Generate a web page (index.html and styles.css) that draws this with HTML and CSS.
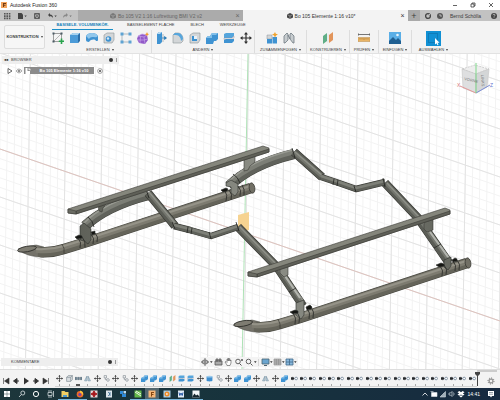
FILE: index.html
```html
<!DOCTYPE html>
<html lang="de">
<head>
<meta charset="utf-8">
<title>Autodesk Fusion 360</title>
<link rel="stylesheet" href="styles.css">
</head>
<body>
<svg class="defs" aria-hidden="true">
  <defs>
    <linearGradient id="steel" x1="0" y1="0" x2="1" y2="0"><stop offset="0" stop-color="#5f6159"/><stop offset=".5" stop-color="#8d8f87"/><stop offset="1" stop-color="#666860"/></linearGradient>
    <symbol id="move" viewBox="0 0 12 12"><path d="M6 1v10M1 6h10" stroke="#333" stroke-width="1.2"/><path d="M6 0l2 2.6H4zM6 12l2-2.6H4zM0 6l2.6-2v4zM12 6L9.400 4v4z" fill="#333"/></symbol>
    <symbol id="box" viewBox="0 0 12 12"><path d="M1 3l3-2h7v7l-2 3H1z" fill="#4c9bd8"/><path d="M1 3l3-2h7L9 3z" fill="#a8d2ef"/><path d="M9 3l2-2v8l-2 2z" fill="#2c6ea8"/></symbol>
    <symbol id="join" viewBox="0 0 12 12"><path d="M0 6l2-2h2l2-3h6v6l-2 2H8l-1 3H0z" fill="#3f93d2"/><path d="M0 6l2-2h2l2-3h6l-2 2H6v3z" fill="#82bfe9"/></symbol>
    <symbol id="split" viewBox="0 0 12 12"><path d="M1 2l2-1h8v3L9 6H1z" fill="#55a5dc"/><path d="M1 6h8l2-2v2L9 7.500H1z" fill="#e6e9ea" stroke="#889" stroke-width=".4"/><path d="M1 8l2-1h8v2l-2 2H1z" fill="#3f93d2"/></symbol>
    <symbol id="ghost" viewBox="0 0 12 12"><path d="M1 4l3-3h7v7l-3 3H1zM1 4h7v7M8 4l3-3" fill="#d9dde0" stroke="#77838b" stroke-width="1"/></symbol>
    <symbol id="group" viewBox="0 0 12 12"><path d="M0 4h3v4H0zM4.500 4h3v4h-3zM9 4h3v4H9z" fill="#6d8797" stroke="#455763" stroke-width=".7"/></symbol>
    <symbol id="mirror" viewBox="0 0 12 12"><path d="M5 2v8H1zM7 2l4 8H7z" fill="#cbdce6" stroke="#5b7b90" stroke-width=".9"/></symbol>
    <symbol id="joint" viewBox="0 0 12 12"><path d="M2 1h4v4H2zM4 5v3h3" fill="none" stroke="#77818a"/><circle cx="8.500" cy="8.500" r="2.300" fill="#eee" stroke="#77818a"/></symbol>
    <symbol id="dot" viewBox="0 0 12 12"><path d="M0 4h3V2.500l3 3.500-3 3.500V8H0z" fill="#25282b"/><circle cx="8.800" cy="6" r="2.300" fill="#fff" stroke="#5b7389" stroke-width="1.200"/></symbol>
    <symbol id="plane" viewBox="0 0 12 12"><path d="M1 4l4-3v8l-4 3z" fill="#5fae86"/><path d="M7 3l4-3v8l-4 3z" fill="#e2955b"/><path d="M5 3l2-1v8l-2 1z" fill="#e8ecec"/></symbol>
    <symbol id="cyl" viewBox="0 0 12 12"><path d="M1 2.500v7c0 2 10 2 10 0v-7z" fill="#3f8fcf"/><ellipse cx="6" cy="2.800" rx="5" ry="1.600" fill="#9ccbed"/></symbol>
  </defs>
</svg>
<div class="app">
  <header class="titlebar">
    <svg class="logo" viewBox="0 0 6 6"><path d="M0 0h6v6H0z" fill="#f3a45c"/><path d="M2 1h3v1H3v.700h1.500v1H3V5H2z" fill="#713b12"/></svg>
    <span class="grow">Autodesk Fusion 360</span>
    <button class="win" aria-label="Minimieren"><svg viewBox="0 0 6 6"><path d="M1 3.500h4" stroke="#222" stroke-width=".7"/></svg></button>
    <button class="win" aria-label="Wiederherstellen"><svg viewBox="0 0 6 6"><path d="M1 2h3v3H1zM2 2V1h3v3H4" fill="none" stroke="#222" stroke-width=".7"/></svg></button>
    <button class="win" aria-label="Schließen"><svg viewBox="0 0 6 6"><path d="M1 1l4 4M5 1L1 5" stroke="#222" stroke-width=".7"/></svg></button>
  </header>

  <nav class="docbar">
    <div class="quick">
      <button aria-label="Datengruppe"><svg viewBox="0 0 10 8"><path d="M2 1h1.600v1.600H2zM4.400 1H6v1.600H4.400zM6.800 1h1.600v1.600H6.800zM2 3.300h1.600v1.600H2zM4.400 3.300H6v1.600H4.400zM6.800 3.300h1.600v1.600H6.800zM2 5.600h1.600v1.600H2zM4.400 5.600H6v1.600H4.400zM6.800 5.600h1.600v1.600H6.800z" fill="#555"/></svg></button>
      <button aria-label="Datei"><svg viewBox="0 0 10 8"><path d="M1 1h3.500L6 2.500V7H1z" fill="#444"/><path d="M7.400 3.500h2.400L8.600 5z" fill="#444"/></svg></button>
      <button aria-label="Speichern"><svg viewBox="0 0 10 8"><path d="M2.500 1.500h5v5h-5zM3.800 1.500v1.700h2.500V1.500M3.500 6.500V4.800h3v1.700" fill="none" stroke="#555" stroke-width=".9"/></svg></button>
      <button aria-label="Rückgängig"><svg viewBox="0 0 10 8"><path d="M1 3l2-2v1.400c2 0 3 1.300 3 3.600-.8-1.300-1.500-1.800-3-1.800V5z" fill="#444"/><path d="M7.400 3.500h2.400L8.600 5z" fill="#444"/></svg></button>
      <button aria-label="Wiederholen"><svg viewBox="0 0 10 8"><path d="M6 3L4 1v1.400C2 2.400 1 3.700 1 6c.8-1.300 1.500-1.800 3-1.800V5z" fill="#888"/><path d="M7.400 3.500h2.400L8.600 5z" fill="#777"/></svg></button>
    </div>
    <div class="doc">
      <span class="docname"><svg viewBox="0 0 6 6"><path d="M0 1.500L3 0l3 1.500v3L3 6 0 4.500z" fill="#777"/><path d="M0 1.500L3 3l3-1.500M3 3v3" fill="none" stroke="#bbb" stroke-width=".5"/></svg>Bo 105 V2 1:16 Luftrettung BMI V2 v2</span>
      <button class="close" aria-label="Tab schließen">×</button>
    </div>
    <div class="doc current">
      <span class="docname"><svg viewBox="0 0 6 6"><path d="M0 1.500L3 0l3 1.500v3L3 6 0 4.500z" fill="#444"/><path d="M0 1.500L3 3l3-1.500M3 3v3" fill="none" stroke="#ccc" stroke-width=".5"/></svg>Bo 105 Elemente 1:16 v10*</span>
      <button class="close" aria-label="Tab schließen">×</button>
    </div>
    <div class="account">
      <button class="plus" aria-label="Neues Design">+</button>
      <button aria-label="Erweiterungen"><svg viewBox="0 0 8 8"><circle cx="4" cy="4" r="2.400" fill="none" stroke="#444" stroke-width="1.300"/><path d="M4 4l3-3" stroke="#bbb"/></svg></button>
      <button aria-label="Auftragsstatus"><svg viewBox="0 0 8 8"><circle cx="4" cy="4" r="3" fill="#555"/><path d="M4 2v2h2" fill="none" stroke="#ddd" stroke-width=".7"/></svg></button>
      <span class="user">Bernd Schölla</span>
      <button aria-label="Hilfe"><svg viewBox="0 0 8 8"><circle cx="4" cy="4" r="3" fill="#444"/><path d="M3 3.200c0-1.400 2-1.300 2 0 0 .8-1 .7-1 1.500M4 5.400v.6" fill="none" stroke="#ddd" stroke-width=".7"/></svg></button>
    </div>
  </nav>

  <section class="ribbon">
    <button class="workspace">KONSTRUKTION<i class="caret"></i></button>
    <div class="tools">
      <div class="tabs">
        <button class="tab on">BASISELE. VOLUMENKÖR.</button>
        <button class="tab">BASISELEMENT FLÄCHE</button>
        <button class="tab">BLECH</button>
        <button class="tab">WERKZEUGE</button>
      </div>
      <div class="groups">
        <div class="group g6">
          <div class="icons">
            <svg viewBox="0 0 12 12"><path d="M1.500 1.500h8v8h-8z" fill="#f5f5f5" stroke="#777" stroke-width=".7"/><path d="M1.500 9.500l8-8" stroke="#777" stroke-width=".5"/><path d="M.5.500h2v2h-2zM8.500.500h2v2h-2zM.5 8.500h2v2h-2z" fill="#4b5b65"/><path d="M9.500 6.500v5.500M6.800 9.200h5.400" stroke="#28a34c" stroke-width="1.600"/></svg>
            <svg viewBox="0 0 12 12"><use href="#box"/></svg>
            <svg viewBox="0 0 12 12"><path d="M0 4c2-4 10-4 12 0v4c0 1-1 1-2 1-1-2-5-2-7 1-2 0-3-1-3-2z" fill="#3f93d2"/><path d="M0 4c2-4 10-4 12 0-2 2-3 1-4 1-2 0-4 0-5 2z" fill="#91c7ec"/></svg>
            <svg viewBox="0 0 12 12"><path d="M1 3l3-2h7v7l-2 3H1z" fill="#d3d6d8" stroke="#8b9398" stroke-width=".6"/><circle cx="5.500" cy="7" r="2.800" fill="#3c91d0"/><circle cx="5" cy="6.500" r="1.200" fill="#d3e8f6"/></svg>
            <svg viewBox="0 0 12 12"><path d="M10 2H2v8h8" fill="none" stroke="#9aa2a8" stroke-width=".7"/><path d="M.5.500h3v3h-3zM8.500.500h3v3h-3zM.5 8.500h3v3h-3zM8.500 8.500h3v3h-3z" fill="#5ea3d3"/></svg>
            <svg viewBox="0 0 12 12"><path d="M1 4l4-2 5 1 1 5-3 4-6-1-2-4z" fill="#9159c8"/><path d="M1 4l4-2 5 1-3 2zM7 5l1 7M0 8l7 0 4-1M3.500 4.500L3 11" fill="none" stroke="#c7a4ea" stroke-width=".7"/><path d="M10 0l.6 1.600 1.400.6-1.400.7L10 4.500l-.6-1.600L8 2.200l1.400-.6z" fill="#f19a2c"/></svg>
          </div>
          <button class="label">ERSTELLEN<i class="caret"></i></button>
        </div>
        <div class="group g6">
          <div class="icons">
            <svg viewBox="0 0 12 12"><path d="M2 2l2-2h3v10l-2 2H2z" fill="#3f93d2"/><path d="M2 2l2-2h3L5 2z" fill="#b6d9f1"/><path d="M7 2h2v8H7z" fill="#d3d6d8"/><path d="M7 6h4M11.500 6L9.500 4.500v3z" stroke="#2277b5" fill="#2277b5" stroke-width=".7"/></svg>
            <svg viewBox="0 0 12 12"><path d="M1 3l2-2h3c3 0 5 3 5 6v2l-2 2H1z" fill="#d3d6d8" stroke="#8b9398" stroke-width=".6"/><path d="M3 1h3c3 0 5 3 5 6l-2 2c0-3-2-6-5-6H1z" fill="#57a6dd"/></svg>
            <svg viewBox="0 0 12 12"><path d="M1 3l3-2h7v7l-2 3H1z" fill="#d3d6d8" stroke="#8b9398" stroke-width=".6"/><path d="M3 4h5v5H3z" fill="#3c91d0"/><path d="M5 4h3v3H5z" fill="#e7f1f8"/></svg>
            <svg viewBox="0 0 12 12"><use href="#join"/></svg>
            <svg viewBox="0 0 12 12"><use href="#split"/></svg>
            <svg viewBox="0 0 12 12"><use href="#move"/></svg>
          </div>
          <button class="label">ÄNDERN<i class="caret"></i></button>
        </div>
        <div class="group g3">
          <div class="icons">
            <svg viewBox="0 0 12 12"><path d="M1 3h5v4H1z" fill="#d3d6d8" stroke="#8b9398" stroke-width=".5"/><path d="M1 7h5v4.500H1zM6.500 5h4.500v6.500H6.500z" fill="#3f93d2"/><path d="M9 0l.8 1.800L12 2.500l-2 1L9 5.500 8 3.500l-2-1 2-.700z" fill="#f0a22d"/></svg>
            <svg viewBox="0 0 12 12"><path d="M1 4l3-3 1 1v6l-3 3H1zM11 4L8 1 7 2v5l3 4h1z" fill="#c7cccf" stroke="#6f7a82" stroke-width=".8"/><path d="M5 3l2 4" stroke="#6f7a82"/></svg>
          </div>
          <button class="label">ZUSAMMENFÜGEN<i class="caret"></i></button>
        </div>
        <div class="group g2">
          <div class="icons"><svg viewBox="0 0 12 12"><use href="#plane"/></svg></div>
          <button class="label">KONSTRUIEREN<i class="caret"></i></button>
        </div>
        <div class="group g1">
          <div class="icons"><svg viewBox="0 0 12 12"><path d="M0 2.500h12M0 1v3M12 1v3" stroke="#555" stroke-width=".8"/><path d="M0 5.500h12v4H0z" fill="#eab566" stroke="#a97730" stroke-width=".4"/><path d="M2 6v1.500M4 6v1.500M6 6v2M8 6v1.500M10 6v1.500" stroke="#875a1e" stroke-width=".5"/></svg></div>
          <button class="label">PRÜFEN<i class="caret"></i></button>
        </div>
        <div class="group g1 wide">
          <div class="icons"><svg viewBox="0 0 12 12"><path d="M0 0h12v12H0z" fill="#5aaee6"/><path d="M0 9l4-4 3 3 2-2 3 3v3H0z" fill="#1f5f92"/><circle cx="8.500" cy="3" r="1.300" fill="#e9f5fc"/></svg></div>
          <button class="label">EINFÜGEN<i class="caret"></i></button>
        </div>
        <div class="group g2 last">
          <div class="icons"><svg class="big" viewBox="0 0 15 15"><path d="M0 0h15v15H0z" fill="#1090d4"/><path d="M2.500 2.500h9v9h-9z" fill="none" stroke="#0c4d78" stroke-width=".6" stroke-dasharray="1 1"/><path d="M9 7v6.500l1.500-1.300 1 2 1-.5-1-2H13.500z" fill="#fff"/></svg></div>
          <button class="label">AUSWÄHLEN<i class="caret"></i></button>
        </div>
      </div>
    </div>
  </section>

  <main class="stage">
    <svg class="scene" viewBox="0 54 500 315" preserveAspectRatio="xMidYMid slice" role="img" aria-label="Landegestell">
      <g id="grid"></g>
      <path d="M0 149L500 321" fill="none" stroke="#dcbab4" stroke-width=".8"/>
      <path d="M248 54L242 369" stroke="#a5dfae" stroke-width=".9"/>
      <path d="M238 215l11-3v18l-11 3z" fill="#f6d391"/>

      <!-- rear skid -->
      <path d="M18 249Q26 257 44 257V247L36 245z" fill="#74726a" stroke="#45453e" stroke-width=".5"/>
      <g fill="none">
        <path d="M40 252Q52 253 64 249L90 241 251 188" stroke="#45453e" stroke-width="10.500"/>
        <path d="M38 252Q52 253 64 249L90 241 251 188" stroke="#65645a" stroke-width="9.500"/>
        <path d="M36 250Q52 252 64 247L90 239 250 187" stroke="#7d7b70" stroke-width="5.500"/>
        <path d="M36 249Q50 250 64 246L90 238 250 186" stroke="#959388" stroke-width="2"/>
        <path d="M62 244q3 4 2 10" stroke="#2b2b27" stroke-width=".6"/>
      </g>
      <ellipse cx="27" cy="249" rx="9.500" ry="2.700" transform="rotate(-10 27 249)" fill="#7e7c72" stroke="#292925" stroke-width=".8"/>
      <ellipse cx="252" cy="188" rx="2.800" ry="5.200" transform="rotate(-10 252 188)" fill="#716f65" stroke="#33332e" stroke-width=".7"/>

      <!-- cross tubes -->
      <g fill="none" stroke-linejoin="round">
        <path d="M85 226Q106 206 148 195" stroke="#3f403b" stroke-width="10.500"/>
        <path d="M85 226Q106 206 148 195" stroke="#60625b" stroke-width="9.500"/>
        <path d="M84 224Q106 204 147 193" stroke="#7c7e76" stroke-width="5"/>
        <path d="M84 223Q105 202 147 191" stroke="#989a92" stroke-width="1.500"/>
        <path d="M229 186Q252 164 294 154" stroke="#3f403b" stroke-width="10.500"/>
        <path d="M229 186Q252 164 294 154" stroke="#60625b" stroke-width="9.500"/>
        <path d="M228 184Q252 162 293 152" stroke="#7c7e76" stroke-width="5"/>
        <path d="M228 182Q251 160 293 150" stroke="#989a92" stroke-width="1.500"/>
        <path d="M148 193L175 226M238 227L277 267 303 306M294 152L322 177M385 183L418 218 449 263" stroke="#353631" stroke-width="8.500"/>
        <path d="M148 193L175 226M238 227L277 267 303 306M294 152L322 177M385 183L418 218 449 263" stroke="#5a5c55" stroke-width="7.500"/>
        <path d="M149 193L175 224M239 227L278 267 303 303M294 152L323 177M386 183L419 218 449 260" stroke="#74766e" stroke-width="4"/>
        <path d="M149 192L175 223M240 227L279 267 304 302M295 152L324 177M387 183L420 218 450 259" stroke="#8f9189" stroke-width="1.300"/>
        <path d="M174 226L190 230 211 236 238 227M321 177L336 182 356 189 385 182" stroke="#353631" stroke-width="6.500"/>
        <path d="M174 226L190 230 211 236 238 227M321 177L336 182 356 189 385 182" stroke="#5f615a" stroke-width="5.500"/>
        <path d="M174 225L190 229 211 235 238 226M321 176L336 181 356 188 385 181" stroke="#7e8078" stroke-width="2.500"/>
        <path d="M188 227l-1 6M192 228l-1 6M334 179l-1 6M338 180l-1 6M209 232l2 7M354 186l2 6M236 222l3 9M383 178l2 9M292 148l3 10M146 189l3 9M88 217q5 4 6 10M233 174q5 3 7 9M172 222l3 7" stroke="#20211e" stroke-width=".8"/>
        <path d="M285 276l15 22M430 232l18 25" stroke="#b3b5af" stroke-width="2"/>
        <path d="M289 292l7-4M434 248l7-4" stroke="#262723" stroke-width=".8"/>
      </g>

      <!-- front skid -->
      <path d="M234 324Q242 332 260 332V322L252 320z" fill="#74726a" stroke="#45453e" stroke-width=".5"/>
      <g fill="none">
        <path d="M256 327Q268 328 280 324L300 318 467 263" stroke="#45453e" stroke-width="10.500"/>
        <path d="M254 327Q268 328 280 324L300 318 467 263" stroke="#65645a" stroke-width="9.500"/>
        <path d="M252 325Q268 327 280 322L300 316 466 262" stroke="#7d7b70" stroke-width="5.500"/>
        <path d="M252 324Q266 325 280 321L300 315 466 261" stroke="#959388" stroke-width="2"/>
        <path d="M278 319q3 5 2 10" stroke="#2b2b27" stroke-width=".6"/>
      </g>
      <ellipse cx="243" cy="323.500" rx="9.500" ry="2.700" transform="rotate(-10 243 323)" fill="#7e7c72" stroke="#292925" stroke-width=".8"/>
      <ellipse cx="468" cy="263" rx="2.800" ry="5.200" transform="rotate(-10 468 263)" fill="#716f65" stroke="#33332e" stroke-width=".7"/>

      <!-- clamps -->
      <g stroke="#2e2f2b" stroke-width=".6">
        <path d="M80 226l4-3 7 6v11l-3 4-4-3-4-1zM226 183l5-3 7 4v8l-3 4-4-3v-6l-5-1zM296 303l8-3v15l-3 4-5-4zM444 260l7-3v9l-3 4-4-3z" fill="url(#steel)"/>
        <path d="M78 238q4 4 2 10M82 237q4 4 3 10M91 234q4 4 2 10M95 233q4 4 2 9M225 191q3 4 1 10M229 190q4 4 2 10M238 186q4 4 2 10M242 185q3 4 2 10M293 313q4 5 2 11M297 312q4 5 2 11M307 308q4 5 2 11M311 307q4 5 2 11M440 266q4 4 2 10M444 265q4 4 2 10M453 261q4 4 2 10M457 260q4 4 2 10" fill="none" stroke-width=".9"/>
        <path d="M75 237l4-2 3 1v2l-5 1zM91 232l4-1v3l-3 1zM221 190l5-2 2 1-1 2-4 1zM290 312l5-2 3 1v2l-5 1zM306 307l4-2 2 2-1 2-4 1zM436 265l5-2 3 1v2l-5 1zM452 260l3-2 2 1v2l-4 1z" fill="#151613"/>
      </g>

      <!-- steps -->
      <g stroke="#3a3b36" stroke-width=".6" stroke-linejoin="round">
        <path d="M98 205l9-2-4 5-1 4-3-1zM244 158l11-4v8l-5 4-2 4-4 1zM280 268l8-3v10l-4 2-4-4zM424 221l9-4v13l-6 2-3-3z" fill="url(#steel)"/>
        <path d="M68 209L263 146l6 2v4L76 214l-8-1z" fill="#85867c"/>
        <path d="M76 211L269 149v3L76 214z" fill="#5f6058"/>
        <path d="M68 209l8 2v3l-8-1z" fill="#6a6b63"/>
        <path d="M248 272L445 208l5 2v4L257 277l-9-1z" fill="#85867c"/>
        <path d="M257 274L450 211v3L257 277z" fill="#5f6058"/>
        <path d="M248 272l9 2v3l-9-1z" fill="#6a6b63"/>
      </g>
    </svg>

    <div class="browser">
      <div class="panel"><b class="arrows">◂◂</b><span class="grow">BROWSER</span><i class="knob"></i><i class="bar"></i></div>
      <div class="node">
        <svg viewBox="0 0 6 6"><path d="M1 .500l4 2.500-4 2.500z" fill="#fff" stroke="#444" stroke-width=".8"/></svg>
        <svg viewBox="0 0 6 6"><path d="M0 3q3-4 6 0-3 4-6 0z" fill="#ddd" stroke="#888" stroke-width=".6"/><circle cx="3" cy="3" r="1" fill="#777"/></svg>
        <span class="root"><svg viewBox="0 0 6 6"><path d="M.5 0h2v3H5v3H.5z" fill="#fff"/><path d="M3.500 0l2 1v1.500l-2-.500z" fill="#e8e8e8"/></svg><span>Bo 105 Elemente 1:16 v10</span></span>
        <svg viewBox="0 0 6 6"><circle cx="3" cy="3" r="2.400" fill="#fff" stroke="#666" stroke-width=".6"/><circle cx="3" cy="3" r="1.100" fill="#555"/></svg>
      </div>
    </div>

    <svg class="cube" viewBox="0 0 60 45" role="img" aria-label="ViewCube">
      <path d="M22 14l13-4 14 4-13 5z" fill="#eeeeee" stroke="#b5b5b5" stroke-width=".6" stroke-dasharray="2 1"/>
      <path d="M22 14l14 5v19l-13-5z" fill="#dedfe0" stroke="#c4c4c4" stroke-width=".6"/>
      <path d="M36 19l13-5-2 18-11 6z" fill="#d4d6d7" stroke="#c4c4c4" stroke-width=".6"/>
      <path d="M20 31l16 7" stroke="#e49a9a"/><path d="M36 38l14-8" stroke="#7d8fd8"/><path d="M36 8v30" stroke="#7fd88a"/>
      <text x="24" y="25" class="face" transform="rotate(12 24 25)">VORNE</text>
      <text x="41" y="20" class="face" transform="rotate(86 41 20)">LINKS</text>
      <text x="17" y="32" class="axis red">X</text><text x="50" y="32" class="axis blue">Z</text>
    </svg>

    <div class="bottom">
      <div class="panel"><span class="grow comments">KOMMENTARE</span><i class="knob"></i><i class="bar"></i></div>
      <div class="navbar">
        <button aria-label="Orbit"><svg viewBox="0 0 12 8"><path d="M4 0v8M0 4h8" stroke="#555" stroke-width=".8"/><ellipse cx="4" cy="4" rx="3" ry="2" fill="none" stroke="#555" stroke-width=".8"/><path d="M9 3.300h2.600L10.300 5z" fill="#333"/></svg></button>
        <button aria-label="Ansehen"><svg viewBox="0 0 12 8"><path d="M3 3h7v4H3zM4 1h2v2H4zM7 1h2v2H7z" fill="#aaa" stroke="#555" stroke-width=".8"/></svg></button>
        <button aria-label="Pan"><svg viewBox="0 0 12 8"><path d="M4 7L2 4l1-.500 1 1V1h1v2-2.500h1V3 .800h1V3l1-1v3L7 7.500H4z" fill="#fff" stroke="#555" stroke-width=".6"/></svg></button>
        <button aria-label="Zoom"><svg viewBox="0 0 12 8"><circle cx="4" cy="3.500" r="2.300" fill="none" stroke="#555" stroke-width=".9"/><path d="M5.500 5.500l2 2M7 2h2M8 1v2" stroke="#555"/></svg></button>
        <button aria-label="Einpassen"><svg viewBox="0 0 12 8"><circle cx="3.500" cy="3.500" r="2.300" fill="none" stroke="#555" stroke-width=".9"/><path d="M5.500 5.500l2 2" stroke="#555"/><path d="M9 3.300h2.600L10.300 5z" fill="#333"/></svg></button>
        <i class="sep"></i>
        <button aria-label="Anzeige"><svg viewBox="0 0 12 8"><path d="M1 1h7v5H1z" fill="#6ba5cf" stroke="#4d6472" stroke-width=".8"/><path d="M3 7.500h3" stroke="#4d6472"/><path d="M9 3.300h2.600L10.300 5z" fill="#333"/></svg></button>
        <button aria-label="Raster"><svg viewBox="0 0 12 8"><path d="M1 1h7v6H1zM3.300 1v6M5.600 1v6M1 3h7M1 5h7" fill="#bbb" stroke="#888" stroke-width=".6"/><path d="M9 3.300h2.600L10.300 5z" fill="#333"/></svg></button>
        <button aria-label="Ansichtsfenster"><svg viewBox="0 0 12 8"><path d="M1 1h7v6H1zM4.500 1v6M1 4h7" fill="#88b8dc" stroke="#41698a" stroke-width=".8"/><path d="M9 3.300h2.600L10.300 5z" fill="#333"/></svg></button>
      </div>
    </div>
  </main>

  <section class="timeline">
    <div class="play">
      <button aria-label="Anfang"><svg viewBox="0 0 8 8"><path d="M1.500 1v6M7 1v6L2.500 4z" fill="#333" stroke="#333" stroke-width=".6"/></svg></button>
      <button aria-label="Zurück"><svg viewBox="0 0 8 8"><path d="M5 1.500v5L1.500 4zM5 4h2" fill="#333" stroke="#333"/></svg></button>
      <button aria-label="Abspielen"><svg viewBox="0 0 8 8"><path d="M2 .500l5 3.500-5 3.500z" fill="#333"/></svg></button>
      <button aria-label="Vor"><svg viewBox="0 0 8 8"><path d="M3 1.500v5L6.500 4zM3 4H1" fill="#333" stroke="#333"/></svg></button>
      <button aria-label="Ende"><svg viewBox="0 0 8 8"><path d="M6.500 1v6M1 1v6L5.500 4z" fill="#333" stroke="#333" stroke-width=".6"/></svg></button>
    </div>
    <ol class="steps" id="steps"></ol>
    <div class="tail">
      <svg class="marker" viewBox="0 0 6 14"><path d="M0 0h5v2L3 4v10H2V4L0 2z" fill="#444"/></svg>
      <button aria-label="Einstellungen"><svg viewBox="0 0 8 8"><circle cx="4" cy="4" r="3" fill="none" stroke="#777" stroke-dasharray="1.200 1.100"/><circle cx="4" cy="4" r="2" fill="none" stroke="#777"/></svg></button>
    </div>
  </section>

  <footer class="taskbar">
    <button aria-label="Start"><svg viewBox="0 0 8 8"><path d="M1 1h2.800v2.800H1zM4.200 1H7v2.800H4.200zM1 4.200h2.800V7H1zM4.200 4.200H7V7H4.200z" fill="#fff"/></svg></button>
    <button aria-label="Suche"><svg viewBox="0 0 8 8"><circle cx="4.800" cy="3" r="2" fill="none" stroke="#dfe6e8" stroke-width=".8"/><path d="M3.400 4.500L1 7" stroke="#dfe6e8" stroke-width=".8"/></svg></button>
    <button aria-label="Cortana"><svg viewBox="0 0 8 8"><circle cx="4" cy="4" r="2.600" fill="none" stroke="#fff"/></svg></button>
    <button aria-label="Taskansicht"><svg viewBox="0 0 8 8"><path d="M1 2.500h4v3H1zM1 1h4M1 7h4M6.500 1v6" fill="none" stroke="#cfd8da" stroke-width=".8"/></svg></button>
    <button class="run" aria-label="Explorer"><svg viewBox="0 0 8 8"><path d="M.5 1h3l1 1h3v5h-7z" fill="#f3cf62"/><path d="M2 5h4v2H2z" fill="#4f9bd0"/></svg></button>
    <button class="run" aria-label="Firefox"><svg viewBox="0 0 8 8"><circle cx="4" cy="4.200" r="3.300" fill="#ee6b28"/><path d="M4 .500q4 1 3 5Q6 3 4 2.500z" fill="#f8c43c"/><circle cx="3.800" cy="4.400" r="1.500" fill="#7542a8"/></svg></button>
    <button aria-label="Irfan"><svg viewBox="0 0 8 8"><path d="M.5.500h7v7h-7z" fill="#e9d5d5"/><path d="M1 4l2-1 1-2 1 2 2 1-2 1-1 2-1-2z" fill="#a4161a" stroke="#a4161a"/></svg></button>
    <button aria-label="Notizen"><svg viewBox="0 0 8 8"><path d="M1 .500h6v7H1z" fill="#dce5ea"/><path d="M3 2l2 2-2 2M5 2v4" fill="none" stroke="#3b6d92" stroke-width=".8"/></svg></button>
    <button aria-label="Fotos"><svg viewBox="0 0 8 8"><path d="M1 1h3v3H1zM3 4h4v3H3z" fill="#2f8ad8"/><path d="M4.500 1H7v2.500H4.500z" fill="#b6dcf6"/></svg></button>
    <button class="run" aria-label="Slicer"><svg viewBox="0 0 8 8"><path d="M.5.500h7v7h-7z" fill="#62b848"/><path d="M1 2l6 4M2 1l5 3" stroke="#eaf6e6"/></svg></button>
    <button class="run active" aria-label="Fusion 360"><svg viewBox="0 0 8 8"><path d="M.5.500h7v7h-7z" fill="#f6b678"/><path d="M3 2h3v1H4v1h1.500v1H4v1.500H3z" fill="#874711"/></svg></button>
    <button class="run" aria-label="Player"><svg viewBox="0 0 8 8"><path d="M.5.500h7v7h-7z" fill="#a8cde5"/><circle cx="4" cy="4" r="2.500" fill="#ef8a25"/><path d="M3.300 2.700l2 1.300-2 1.300z" fill="#fff"/></svg></button>
    <button class="run" aria-label="Word"><svg viewBox="0 0 8 8"><path d="M1 .500h6v7H1z" fill="#e3ecf7"/><path d="M2 2.500l.8 3L4 3l1.200 2.500.8-3" fill="none" stroke="#2457a4"/></svg></button>
    <button class="run" aria-label="Galerie"><svg viewBox="0 0 8 8"><path d="M.5.500h7v7h-7z" fill="#f4f7f8"/><path d="M.5 6.500l2-3 1.500 2 1.500-1 2 2v1h-7z" fill="#16262e"/></svg></button>
    <span class="grow"></span>
    <div class="tray">
      <svg viewBox="0 0 8 8"><path d="M1.500 5.500L4 3l2.500 2.500" fill="none" stroke="#fff" stroke-width=".8"/></svg>
      <svg viewBox="0 0 8 8"><path d="M1.500 2.500H7v4H1.500zM.5 1.500h3" fill="#fff" stroke="#dfe6ea" stroke-width=".6"/></svg>
      <svg viewBox="0 0 8 8"><path d="M1 7L6.500 1.500V7zM3 5v2M5 3v4" fill="#8f9da8" stroke="#cfd8de" stroke-width=".6"/></svg>
      <svg viewBox="0 0 8 8"><path d="M1 3h1.500L4 1.500v5L2.500 5H1zM5.500 2.500q1.200 1.500 0 3" fill="none" stroke="#cfd8de" stroke-width=".7"/></svg>
      <svg viewBox="0 0 8 8"><path d="M2.300 1L4 2.200 5.700 1l1.800 1.200L5.800 3.400l1.700 1.200L5.700 5.800 4 4.600 2.300 5.800.5 4.600l1.700-1.200L.5 2.200zM4 5.200L5.600 6.300 4 7.400 2.400 6.300z" fill="#fff"/></svg>
    </div>
    <time>14:41</time>
    <button class="chat" aria-label="Benachrichtigungen"><svg viewBox="0 0 8 8"><path d="M1 1h6v5H5L4 7.500 3 6H1z" fill="#fff"/><path d="M2 2.500h4M2 4.200h4" stroke="#50606c" stroke-width=".6"/></svg></button>
  </footer>
</div>
<script src="app.js"></script>
</body>
</html>
```
FILE: styles.css
```css
* { box-sizing: border-box; }
body {
  margin: 0;
  font: 5px/6px "Liberation Sans", Arial, sans-serif;
  color: #3c3c3c;
  background: #fff;
}
button {
  margin: 0;
  padding: 0;
  border: 0;
  background: none;
  color: inherit;
  font: inherit;
  display: flex;
  align-items: center;
  justify-content: center;
}
svg { display: block; flex: none; }
.defs { position: absolute; width: 0; height: 0; }
.grow { flex: 1; }
.app { min-height: 100vh; display: flex; flex-direction: column; }

.titlebar { height: 10px; display: flex; align-items: center; padding: 0 2px 0 1px; gap: 3px; color: #222; }
.logo { width: 6px; height: 6px; }
.win { width: 15px; }
.win svg { width: 6px; height: 6px; }

.docbar { height: 11px; display: flex; background: #c2c2c2; }
.quick { width: 78px; display: flex; align-items: center; gap: 4px; padding-left: 1px; }
.quick button { width: 11px; }
.quick svg { width: 10px; height: 8px; }
.doc { flex: 1; display: flex; align-items: center; background: #ababab; color: #666; padding-right: 2px; }
.doc.current { background: #f3f3f3; color: #333; }
.docname { flex: 1; display: flex; justify-content: center; align-items: center; gap: 2px; }
.docname svg { width: 6px; height: 6px; }
.close { width: 7px; font-size: 7px; }
.account { width: 92px; display: flex; align-items: center; gap: 4px; }
.account svg { width: 8px; height: 8px; }
.plus { width: 12px; height: 11px; background: #a9a9a9; font-size: 9px; }
.user { flex: 1; text-align: center; white-space: nowrap; }
.account button:last-child { width: 13px; }

.ribbon { height: 33px; display: flex; background: #f3f3f3; padding-left: 4px; gap: 4px; border-bottom: 1px solid #e2e2e2; }
.workspace { width: 41px; height: 24px; margin-top: 4px; border: 1px solid #ddd; border-radius: 2px; font-weight: bold; font-size: 4px; background: #f6f6f6; }
.caret { border: 1px solid transparent; border-top: 2px solid #444; border-bottom: 0; margin-left: 2px; }
.tools { flex: 1; }
.tabs { height: 9px; display: flex; padding-left: 3px; gap: 12px; }
.tab { height: 9px; white-space: nowrap; font-size: 4px; padding: 0 2px; border-bottom: 1px solid transparent; }
.tab.on { width: 61px; color: #1580b8; border-bottom: 1px solid #1a8fc8; font-weight: bold; }
.groups { display: flex; }
.group { height: 23px; display: flex; flex-direction: column; align-items: center; gap: 1px; border-right: 1px solid #ddd; }
.group.last { border: 0; }
.g6 { width: 103px; }
.g3 { width: 52px; }
.g2 { width: 43px; }
.g1 { width: 29px; }
.wide { width: 33px; }
.icons { height: 16px; display: flex; align-items: center; gap: 5px; }
.icons svg { width: 12px; height: 12px; }
.icons .big { width: 15px; height: 15px; }
.label { height: 6px; font-size: 4px; white-space: nowrap; }

.stage { flex: 1; position: relative; min-height: 120px; display: flex; flex-direction: column; justify-content: space-between; overflow: hidden; }
.scene { position: absolute; inset: 0; width: 100%; height: 100%; }
.minor { stroke: #f3f3f3; stroke-width: 1; }
.major { stroke: #e3e3e3; stroke-width: 1; }
.browser { position: relative; padding: 2px; width: 120px; }
.panel { width: 117px; height: 8px; display: flex; align-items: center; gap: 3px; background: #eee; padding: 0 2px; font-size: 4px; }
.arrows { font-size: 4px; color: #222; }
.knob { width: 4px; height: 4px; border-radius: 50%; background: #333; }
.bar { width: 1px; height: 4px; background: #999; }
.node { display: flex; align-items: center; gap: 3px; padding: 3px 0 0 5px; }
.node svg { width: 6px; height: 6px; }
.root { width: 70px; height: 7px; display: flex; align-items: center; gap: 3px; background: #8b8b8b; color: #fff; font-weight: bold; font-size: 4px; margin-left: -1px; padding-left: 1px; white-space: nowrap; }
.root span { flex: 1; text-align: center; }
.cube { position: absolute; top: 1px; right: 0; width: 60px; height: 45px; }
.face { font-size: 4px; fill: #777; }
.axis { font-size: 5px; }
.red { fill: #dc7777; }
.blue { fill: #6377cf; }
.bottom { position: relative; display: flex; align-items: center; gap: 82px; padding: 0 1px 2px; }
.comments { padding-left: 8px; }
.navbar { display: flex; align-items: center; height: 10px; background: #f4f4f4; padding: 0 1px; }
.navbar svg { width: 12px; height: 8px; }
.navbar button { width: 12px; height: 10px; }
.navbar button:nth-child(-n+5) { width: 11px; }
.sep { width: 1px; height: 7px; background: #d5d5d5; margin: 0 2px; }

.timeline { height: 19px; display: flex; background: #f3f3f3; border-top: 1px solid #ddd; }
.play { width: 55px; display: flex; align-items: center; justify-content: space-between; padding: 3px 5px 0 2px; }
.play svg { width: 8px; height: 8px; }
.steps { flex: 1; display: flex; list-style: none; margin: 5px 0 0; padding: 0; }
.steps li { flex: 1; height: 12px; display: flex; flex-direction: column; align-items: center; justify-content: space-between; border-bottom: 1px solid #d2d2d2; }
.steps li::after { content: ""; width: 1px; height: 2px; background: #aaa; }
.steps li:nth-child(3)::after { width: 4px; background: #555; }
.steps svg { width: 7px; height: 7px; }
.tail { width: 23px; display: flex; justify-content: space-between; align-items: center; padding-right: 5px; background: linear-gradient(#ccc, #ccc) no-repeat 0 0 / 20px 2px; }
.marker { width: 6px; height: 14px; margin-left: -2px; }
.tail button { padding-top: 4px; }
.tail button svg { width: 8px; height: 8px; }

.taskbar { height: 12px; display: flex; background: linear-gradient(90deg, #1d363b, #17333d 50%, #172a40); color: #fff; }
.taskbar > button { width: 14px; border-bottom: 1px solid transparent; }
.taskbar > button:nth-child(even) { width: 15px; }
.taskbar svg { width: 8px; height: 8px; }
.taskbar .run { border-bottom-color: #78b7dc; }
.taskbar .active { background: #52666e; }
.tray { display: flex; align-items: center; gap: 1px; }
.taskbar time { padding: 3px 5px 0 2px; }
.taskbar > .chat { width: 20px; padding-right: 4px; }
```
FILE: app.js
```js
const NS = "http://www.w3.org/2000/svg";

// Ground-plane grid: every fifth line is a major one.
const grid = document.getElementById("grid");
function line(x1, y1, x2, y2, kind) {
  const l = document.createElementNS(NS, "path");
  l.setAttribute("d", `M${x1} ${y1}L${x2} ${y2}`);
  l.setAttribute("class", kind);
  grid.appendChild(l);
}
for (const kind of ["minor", "major"]) {
  const step = kind === "minor" ? 1 : 5;
  for (let i = -10; i < 75; i += step) {
    const x = -6 + i * 7.28;
    line(x, 54, x - 5, 369, kind);
  }
  for (let i = -35; i < 30; i += step) {
    const y = 149 + i * 9.6;
    line(0, y, 500, y + 172, kind);
  }
}

// Feature history.
const features = ("move ghost group mirror move joint move joint move join join join plane split split " +
  "move cyl joint move join join move mirror move join").split(" ")
  .concat(Array(20).fill("dot"));
const steps = document.getElementById("steps");
for (const name of features) {
  const li = document.createElement("li");
  li.innerHTML = `<svg viewBox="0 0 12 12"><use href="#${name}"/></svg>`;
  steps.appendChild(li);
}
```
